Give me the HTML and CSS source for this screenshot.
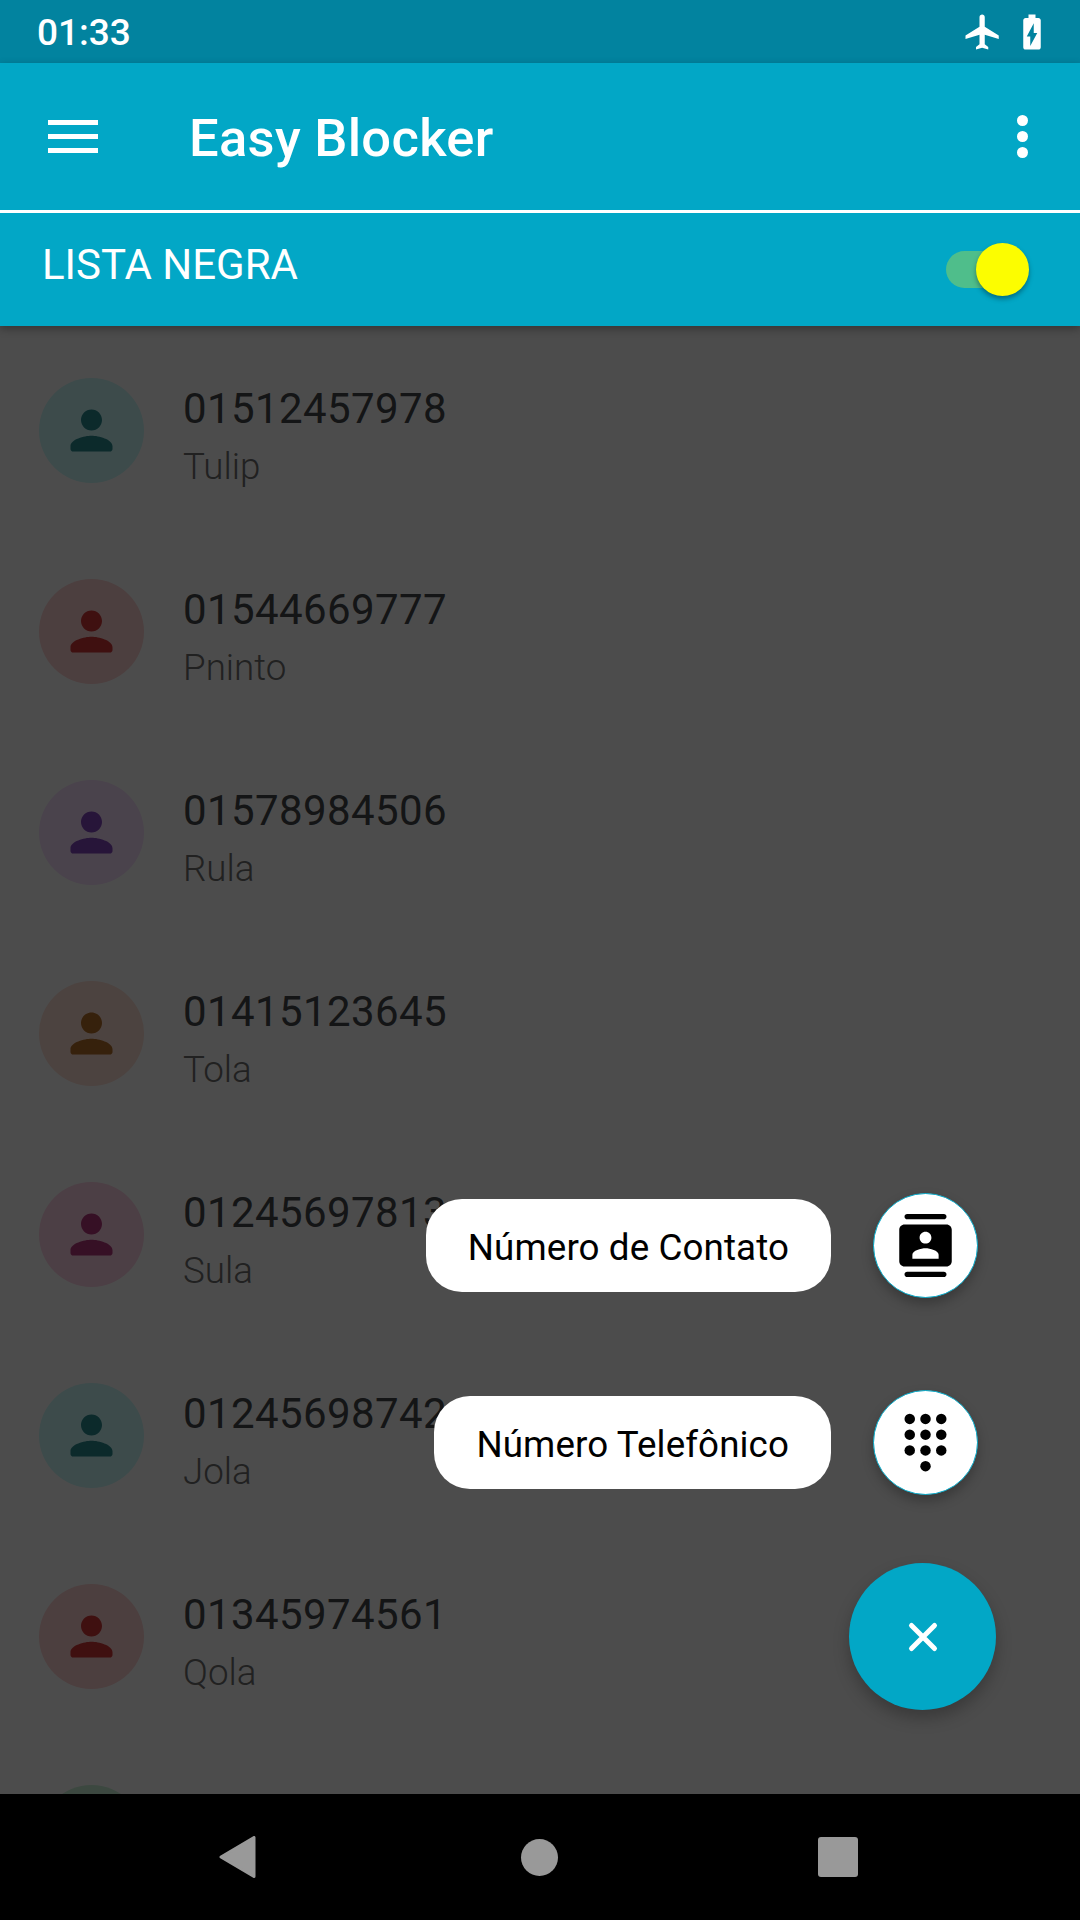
FILE: index.html
```html
<!DOCTYPE html>
<html lang="en">
<head>
  <meta charset="UTF-8">
  <meta name="viewport" content="width=device-width, initial-scale=1.0">
  <title>Easy Blocker</title>
  <link rel="stylesheet" href="styles.css">
</head>
<body>
  <svg class="defs" width="0" height="0">
    <symbol id="person" viewBox="0 0 24 24">
      <path d="M12 12c2.21 0 4-1.79 4-4s-1.79-4-4-4-4 1.79-4 4 1.79 4 4 4zm0 2c-2.67 0-8 1.34-8 4v1c0 .55.45 1 1 1h14c.55 0 1-.45 1-1v-1c0-2.66-5.33-4-8-4z"/>
    </symbol>
  </svg>

  <div class="statusbar">
    <span class="time">01:33</span>
    <div class="status-icons">
      <svg class="status-icon" viewBox="0 0 24 24"><path d="M21 16v-2l-8-5V3.5c0-.83-.67-1.5-1.5-1.5S10 2.67 10 3.5V9l-8 5v2l8-2.5V19l-2 1.5V22l3.5-1 3.5 1v-1.5L13 19v-5.5l8 2.5z"/></svg>
      <svg class="status-icon" viewBox="0 0 24 24"><path fill-rule="evenodd" d="M15.67 4H14V2h-4v2H8.33C7.6 4 7 4.6 7 5.33v15.33C7 21.4 7.6 22 8.33 22h7.33c.74 0 1.34-.6 1.34-1.33V5.33C17 4.6 16.4 4 15.67 4zM11 20v-5.5H9L13 7v5.5h2L11 20z"/></svg>
    </div>
  </div>

  <div class="header">
    <div class="toolbar">
      <div class="hamburger"><span></span><span></span><span></span></div>
      <h1 class="title">Easy Blocker</h1>
      <div class="more"><span></span><span></span><span></span></div>
    </div>
    <div class="tabbar">
      <span class="tab-label">LISTA NEGRA</span>
      <div class="switch">
        <div class="switch-track"></div>
        <div class="switch-thumb"></div>
      </div>
    </div>
  </div>

  <div class="content">
    <div class="contact-list">
      <div class="contact">
        <div class="avatar teal"><svg><use href="#person"/></svg></div>
        <div class="contact-text"><div class="number">01512457978</div><div class="name">Tulip</div></div>
      </div>
      <div class="contact">
        <div class="avatar red"><svg><use href="#person"/></svg></div>
        <div class="contact-text"><div class="number">01544669777</div><div class="name">Pninto</div></div>
      </div>
      <div class="contact">
        <div class="avatar purple"><svg><use href="#person"/></svg></div>
        <div class="contact-text"><div class="number">01578984506</div><div class="name">Rula</div></div>
      </div>
      <div class="contact">
        <div class="avatar orange"><svg><use href="#person"/></svg></div>
        <div class="contact-text"><div class="number">01415123645</div><div class="name">Tola</div></div>
      </div>
      <div class="contact">
        <div class="avatar pink"><svg><use href="#person"/></svg></div>
        <div class="contact-text"><div class="number">01245697813</div><div class="name">Sula</div></div>
      </div>
      <div class="contact">
        <div class="avatar teal"><svg><use href="#person"/></svg></div>
        <div class="contact-text"><div class="number">01245698742</div><div class="name">Jola</div></div>
      </div>
      <div class="contact">
        <div class="avatar red"><svg><use href="#person"/></svg></div>
        <div class="contact-text"><div class="number">01345974561</div><div class="name">Qola</div></div>
      </div>
      <div class="contact">
        <div class="avatar green"><svg><use href="#person"/></svg></div>
      </div>
    </div>

    <!-- Dim layer behind the open fab menu -->
    <div class="scrim"></div>

    <div class="fab-menu">
      <div class="fab-row">
        <span class="fab-label">Número de Contato</span>
        <div class="mini-fab">
          <svg viewBox="0 0 24 24"><path fill-rule="evenodd" d="M19 0H5c-.55 0-1 .45-1 1s.45 1 1 1h14c.55 0 1-.45 1-1s-.45-1-1-1zM5 24h14c.55 0 1-.45 1-1s-.45-1-1-1H5c-.55 0-1 .45-1 1s.45 1 1 1zM20 4H4c-1.1 0-2 .9-2 2v12c0 1.1.9 2 2 2h16c1.1 0 2-.9 2-2V6c0-1.1-.9-2-2-2zm-8 2.75c1.24 0 2.25 1.01 2.25 2.25s-1.01 2.25-2.25 2.25S9.75 10.24 9.75 9 10.76 6.75 12 6.75zM17 17H7v-1.5c0-1.67 3.33-2.5 5-2.5s5 .83 5 2.5V17z"/></svg>
        </div>
      </div>
      <div class="fab-row">
        <span class="fab-label">Número Telefônico</span>
        <div class="mini-fab">
          <svg viewBox="0 0 24 24">
            <circle cx="6" cy="3" r="2"/><circle cx="12" cy="3" r="2"/><circle cx="18" cy="3" r="2"/>
            <circle cx="6" cy="9" r="2"/><circle cx="12" cy="9" r="2"/><circle cx="18" cy="9" r="2"/>
            <circle cx="6" cy="15" r="2"/><circle cx="12" cy="15" r="2"/><circle cx="18" cy="15" r="2"/>
            <circle cx="12" cy="21" r="2"/>
          </svg>
        </div>
      </div>
      <div class="main-fab">
        <svg viewBox="0 0 28 28"><path d="M2.500 2.500l23 23M25.500 2.500l-23 23"/></svg>
      </div>
    </div>
  </div>

  <div class="navbar">
    <svg class="nav-back" viewBox="0 0 40 42"><path d="M36 1.500v39L3 21z"/></svg>
    <div class="nav-home"></div>
    <div class="nav-recent"></div>
  </div>
</body>
</html>
```

FILE: styles.css
```css
* {
  box-sizing: border-box;
}

body {
  display: flex;
  flex-direction: column;
  width: 1080px;
  height: 1920px;
  margin: 0;
  overflow: hidden;
  background: #fff;
  font-family: Roboto, "Liberation Sans", sans-serif;
}

.defs {
  position: absolute;
}

/* Status bar */
.statusbar {
  display: flex;
  justify-content: space-between;
  align-items: center;
  height: 63px;
  padding: 0 27px 0 37px;
  background-color: #02839f;
  color: #fff;
}

.time {
  margin-top: 2px;
  font-size: 37px;
  font-weight: 500;
}

.status-icons {
  display: flex;
  gap: 7px;
}

.status-icon {
  width: 42px;
  height: 42px;
  fill: #fff;
}

/* Header */
.header {
  position: relative;
  z-index: 2;
  background-color: #02a7c6;
  box-shadow: 0 3px 8px rgba(0, 0, 0, 0.3);
  color: #fff;
}

.toolbar {
  display: flex;
  align-items: center;
  height: 147px;
  padding: 0 47px 0 48px;
}

.hamburger {
  display: flex;
  flex-direction: column;
  gap: 9px;
  width: 50px;
}

.hamburger span {
  height: 5px;
  background: #fff;
}

.title {
  flex: 1;
  margin: 2px 0 0 91px;
  font-size: 52.5px;
  font-weight: 500;
  letter-spacing: 0.3px;
}

.more {
  display: flex;
  flex-direction: column;
  gap: 5px;
  margin-right: 5px;
}

.more span {
  width: 11px;
  height: 11px;
  border-radius: 50%;
  background: #fff;
}

.tabbar {
  display: flex;
  justify-content: space-between;
  align-items: center;
  height: 116px;
  padding: 0 51px 0 42px;
  border-top: 3px solid #fff;
}

.tab-label {
  font-size: 42px;
  line-height: 49px;
  margin-bottom: 10px;
}

.switch {
  position: relative;
  width: 83px;
  height: 52px;
  margin-bottom: 2px;
}

.switch-track {
  position: absolute;
  top: 8px;
  left: 0;
  width: 72px;
  height: 37px;
  border-radius: 19px;
  background: #4fbe8b;
}

.switch-thumb {
  position: absolute;
  top: 0;
  right: 0;
  width: 53px;
  height: 53px;
  border-radius: 50%;
  background: #fcfd00;
  box-shadow: 0 3px 5px rgba(0, 0, 0, 0.35);
}

/* Contact list */
.content {
  position: relative;
  flex: 1;
  overflow: hidden;
}

.contact-list {
  padding: 4px 0 0 39px;
}

.contact {
  display: flex;
  align-items: flex-start;
  gap: 39px;
  height: 201px;
  padding-top: 48px;
}

.avatar {
  display: flex;
  justify-content: center;
  align-items: center;
  width: 105px;
  height: 105px;
  border-radius: 50%;
}

.avatar svg {
  width: 63px;
  height: 63px;
  fill: currentColor;
}

.avatar.teal { background: #cbfafa; color: #288c92; }
.avatar.red { background: #ffd2d2; color: #d23737; }
.avatar.purple { background: #f7dfff; color: #8246be; }
.avatar.orange { background: #ffdfd5; color: #b46e28; }
.avatar.pink { background: #ffd2e6; color: #b4377d; }
.avatar.green { background: #c9f0d6; color: #3cb371; }

.contact-text {
  display: flex;
  flex-direction: column;
}

.number {
  margin-top: 3px;
  font-size: 42px;
  line-height: 55px;
  letter-spacing: 0.4px;
  color: #45484b;
}

.name {
  font-size: 36.75px;
  font-weight: 300;
  line-height: 62px;
  color: #6e6e6e;
}

.scrim {
  position: absolute;
  top: 0;
  left: 0;
  width: 100%;
  height: 100%;
  background: rgba(0, 0, 0, 0.7);
}

/* Fab menu */
.fab-menu {
  position: absolute;
  right: 84px;
  bottom: 84px;
  display: flex;
  flex-direction: column;
  align-items: flex-end;
}

.fab-row {
  display: flex;
  align-items: center;
  gap: 42px;
  margin: 0 18px 92px 0;
}

.fab-row + .fab-row {
  margin-bottom: 68px;
}

.fab-label {
  height: 93px;
  padding: 0 42px;
  border-radius: 36px;
  background: #fff;
  color: #000;
  font-size: 36.75px;
  letter-spacing: 0.1px;
  line-height: 98px;
}

.mini-fab {
  display: flex;
  justify-content: center;
  align-items: center;
  width: 105px;
  height: 105px;
  border: 1.5px solid #02a7c6;
  border-radius: 50%;
  background: #fff;
  box-shadow: 0 6px 12px rgba(0, 0, 0, 0.25);
}

.mini-fab svg {
  width: 63px;
  height: 63px;
}

.main-fab {
  display: flex;
  justify-content: center;
  align-items: center;
  width: 147px;
  height: 147px;
  border-radius: 50%;
  background: #02a7c6;
  box-shadow: 0 8px 16px rgba(0, 0, 0, 0.25);
}

.main-fab svg {
  width: 28px;
  height: 28px;
  overflow: visible;
  fill: none;
  stroke: #fff;
  stroke-width: 5;
  stroke-linecap: round;
}

/* Navigation bar */
.navbar {
  position: relative;
  z-index: 2;
  display: flex;
  align-items: center;
  height: 126px;
  padding-left: 218px;
  background: #000;
}

.nav-back {
  width: 40px;
  height: 42px;
  fill: #999;
  stroke: #999;
  stroke-width: 3;
  stroke-linejoin: round;
}

.nav-home {
  width: 37px;
  height: 37px;
  margin: 0 260px 0 263px;
  border-radius: 50%;
  background: #999;
}

.nav-recent {
  width: 40px;
  height: 40px;
  border-radius: 3px;
  background: #999;
}
```
